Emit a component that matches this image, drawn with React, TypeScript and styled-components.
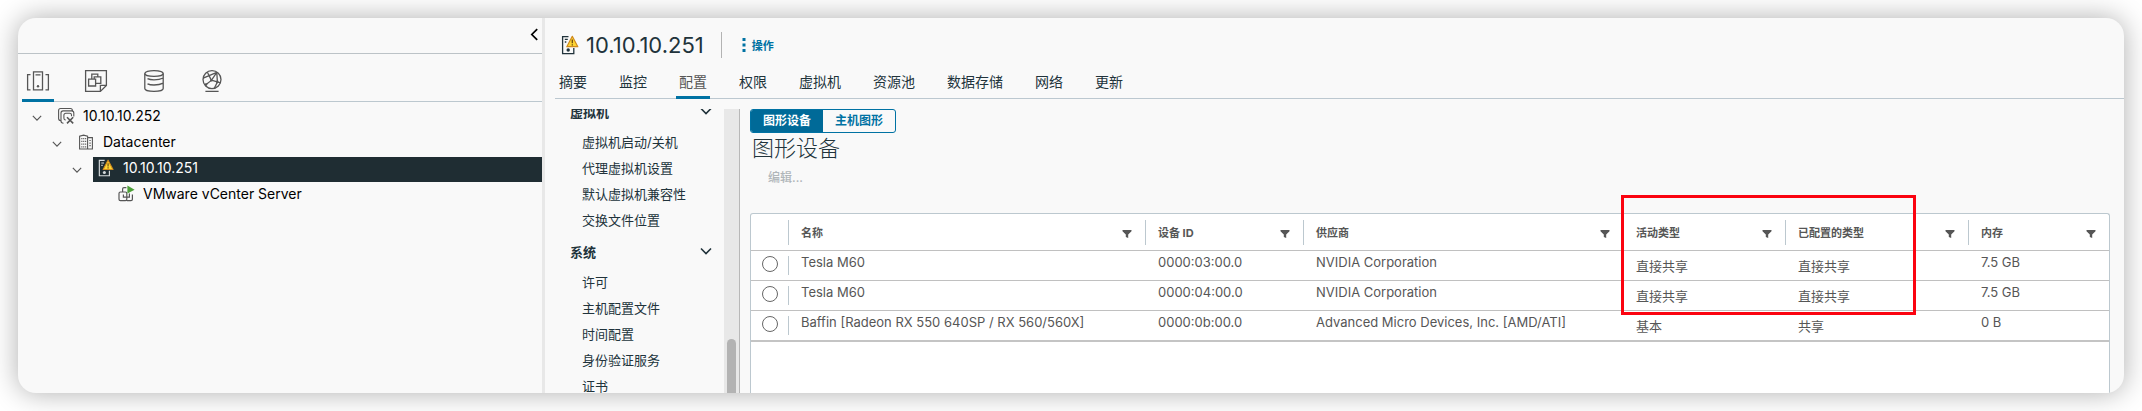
import React from "react";
import styled, { createGlobalStyle } from "styled-components";

const GlobalStyle = createGlobalStyle`
  *, *::before, *::after { box-sizing: border-box; }
  body {
    margin: 0;
    background: #fff;
    color: #000;
    font-family: Inter, "Noto Sans CJK SC", sans-serif;
    font-size: 14px;
  }
  button {
    font: inherit;
    color: inherit;
    background: none;
    border: 0;
    margin: 0;
    padding: 0;
    cursor: pointer;
  }
`;

const Shell = styled.div`
  display: flex;
  height: calc(100vh - 36px);
  margin: 18px;
  overflow: hidden;
  border-radius: 18px;
  background: #f9f9f9;
`;

const Backdrop = styled.div`
  display: flow-root;
  overflow: hidden;
  & > ${Shell} { box-shadow: 0 0 28px rgba(0, 0, 0, 0.32); }
`;

/* Inventory sidebar */

const Sidebar = styled.aside`
  flex: 0 0 527px;
  display: flex;
  flex-direction: column;
  border-right: 3px solid #e8e8e8;
`;

const SidebarTop = styled.div`
  display: flex;
  justify-content: flex-end;
  align-items: center;
  height: 36px;
  padding-right: 1px;
  border-bottom: 1px solid #bcc3c7;
`;

const InventoryTabs = styled.div`
  display: flex;
  gap: 26px;
  height: 48px;
  margin-left: 4px;
  border-bottom: 1px solid #bcc8cf;
`;

const InventoryTab = styled.button<{ $active?: boolean }>`
  display: flex;
  justify-content: center;
  width: 32px;
  height: 48px;
  padding-top: 15px;
  border-bottom: 3px solid ${(p) => (p.$active ? "#0072a3" : "transparent")};
  color: #565656;
`;

const Tree = styled.ul`
  list-style: none;
  margin: 0;
  padding: 3px 0 0;
`;

const TreeRow = styled.li<{ $depth: number }>`
  display: flex;
  align-items: center;
  height: 25px;
  margin-bottom: 1px;
  padding-left: ${(p) => 11 + p.$depth * 20}px;
`;

const Twisty = styled.button`
  display: flex;
  justify-content: center;
  width: 16px;
  margin-right: 8px;
  color: #565656;
`;

const TwistySpace = styled.span`
  width: 24px;
`;

const TreeLabel = styled.button<{ $selected?: boolean }>`
  flex: 1;
  display: flex;
  align-items: center;
  gap: 8px;
  height: 25px;
  padding: 0 0 3px 4px;
  line-height: 20px;
  background: ${(p) => (p.$selected ? "#1f2d33" : "transparent")};
  color: ${(p) => (p.$selected ? "#fff" : "#000")};
  & > svg {
    width: 18px;
    color: ${(p) => (p.$selected ? "#d5dadc" : "#565656")};
  }
`;

/* Object view */

const Main = styled.main`
  flex: 1;
  min-width: 0;
  display: flex;
  flex-direction: column;
  color: #21333b;
`;

const TitleBar = styled.header`
  display: flex;
  align-items: center;
  height: 54px;
  padding-left: 16px;
`;

const Title = styled.h1`
  margin: 0 17px 0 7px;
  font-size: 22px;
  line-height: 28px;
  font-weight: 400;
`;

const ActionsButton = styled.button`
  display: flex;
  align-items: center;
  gap: 6px;
  height: 26px;
  padding-left: 20px;
  border-left: 1px solid #b3b3b3;
  color: #0072a3;
  font-size: 11px;
  font-weight: 700;
`;

const TabBar = styled.nav`
  display: flex;
  gap: 26px;
  height: 27px;
  margin-left: 10px;
  padding-left: 1px;
  border-bottom: 1px solid #bcc8d0;
`;

const Tab = styled.button<{ $active?: boolean }>`
  height: 27px;
  padding: 0 3px 5px;
  line-height: 19px;
  border-bottom: 3px solid ${(p) => (p.$active ? "#0072a3" : "transparent")};
  color: ${(p) => (p.$active ? "#565656" : "#21333b")};
`;

const Body = styled.div`
  flex: 1;
  min-height: 0;
  display: flex;
  padding-top: 10px;
`;

const Settings = styled.nav`
  flex: 0 0 195px;
  display: flex;
  justify-content: space-between;
  overflow: hidden;
  border-right: 1px solid #b8b8b8;
  font-size: 13px;
`;

const SettingsList = styled.div`
  width: 167px;
  margin-top: -16px;
  padding-left: 25px;
`;

const GroupHeading = styled.button`
  display: flex;
  align-items: center;
  justify-content: space-between;
  width: 100%;
  height: 36px;
  font-weight: 700;
`;

const SettingsLink = styled.a`
  display: block;
  height: 26px;
  padding-left: 12px;
  line-height: 26px;
  color: #21333b;
  text-decoration: none;
  white-space: nowrap;
`;

const ScrollTrack = styled.div`
  width: 15px;
  padding: 230px 3px 0;
  background: #e8e8e8;
`;

const ScrollThumb = styled.div`
  height: 100px;
  border-radius: 5px;
  background: #b3b3b3;
`;

const Content = styled.section`
  flex: 1;
  min-width: 0;
  display: flex;
  flex-direction: column;
  align-items: flex-start;
  padding: 0 14px 0 10px;
`;

const Switcher = styled.div`
  display: flex;
  height: 24px;
  overflow: hidden;
  border: 1px solid #0072a3;
  border-radius: 3px;
`;

const SwitchButton = styled.button<{ $active?: boolean }>`
  padding: 0 12px;
  font-size: 12px;
  font-weight: 700;
  line-height: 22px;
  background: ${(p) => (p.$active ? "#006a98" : "transparent")};
  color: ${(p) => (p.$active ? "#fff" : "#0072a3")};
`;

const Heading = styled.h2`
  margin: 0 0 0 2px;
  font-size: 22px;
  line-height: 30px;
  font-weight: 300;
`;

const EditButton = styled.button`
  margin: 5px 0 25px 18px;
  font-size: 12px;
  font-weight: 500;
  line-height: 20px;
  &:disabled { color: #b0b6b9; cursor: default; }
`;

const Grid = styled.div`
  position: relative;
  flex: 1;
  align-self: stretch;
  border: 1px solid #bcc8cf;
  border-bottom: 0;
  border-radius: 3px 3px 0 0;
  background: #fff;
`;

const Table = styled.table`
  width: 100%;
  table-layout: fixed;
  border-collapse: separate;
  border-spacing: 0;
  color: #565656;
  font-size: 13px;
`;

const Column = styled.col<{ $width?: number }>`
  width: ${(p) => (p.$width ? p.$width + "px" : "auto")};
`;

const HeadCell = styled.th`
  height: 37px;
  padding: 0;
  border-bottom: 1px solid #c0c0c0;
  font-size: 11px;
  text-align: left;
`;

const HeadInner = styled.div<{ $ruled?: boolean }>`
  display: flex;
  align-items: center;
  justify-content: space-between;
  height: 25px;
  padding: 0 13px 0 12px;
  border-left: 1px solid ${(p) => (p.$ruled ? "#bcc8cf" : "transparent")};
`;

const FilterButton = styled.button`
  display: flex;
  padding-top: 4px;
  color: #565656;
`;

const Row = styled.tr`
  &:last-child > td { border-bottom: 2px solid #c4c4c4; height: 31px; }
`;

const Cell = styled.td<{ $low?: boolean }>`
  height: 30px;
  padding: ${(p) => (p.$low ? "5px 0 0 13px" : "1px 0 0 13px")};
  border-bottom: 1px solid #c0c0c0;
  line-height: 20px;
  vertical-align: top;
  white-space: nowrap;
`;

const PickCell = styled(Cell)`
  padding: 5px 0 0;
`;

const PickInner = styled.div`
  display: flex;
  padding-left: 11px;
  height: 19px;
`;

const Radio = styled.input`
  appearance: none;
  width: 16px;
  height: 16px;
  margin: 0;
  border: 1px solid #666;
  border-radius: 50%;
  background: #fff;
`;

const RuledValue = styled.div`
  height: 19px;
  margin: 4px 0 0 -13px;
  padding-left: 12px;
  border-left: 1px solid #bcc8cf;
  line-height: 12px;
`;

const Highlight = styled.div`
  position: absolute;
  top: -19px;
  right: 193px;
  width: 295px;
  height: 120px;
  border: 3px solid #fb0310;
  pointer-events: none;
`;

/* Icons */

type ChevronProps = { dir: "down" | "left"; width: number; stroke: number };

const Chevron = ({ dir, width, stroke }: ChevronProps) => (
  <svg width={width} height={width} viewBox="0 0 12 12" fill="none" stroke="currentColor" strokeWidth={stroke} aria-hidden="true">
    <path d={dir === "down" ? "M1 3.5 6 8.5 11 3.5" : "M8.5 1 3.5 6 8.5 11"} />
  </svg>
);

const Line = ({ size, children }: { size: number; children: React.ReactNode }) => (
  <svg width={size} height={size} viewBox={`0 0 ${size} ${size}`} fill="none" stroke="currentColor" strokeWidth="1.3" aria-hidden="true">
    {children}
  </svg>
);

const HostsIcon = () => (
  <Line size={24}>
    <path d="M7.5 2.9h9v18h-9zM9.5 5.800h5M4.500 5.600H1.600v15.200h2.900M19.500 5.600h2.900v15.200h-2.900" />
    <circle cx="12" cy="17.2" r="1.2" fill="currentColor" stroke="none" />
  </Line>
);

const VmsIcon = () => (
  <Line size={24}>
    <path d="M1.6 1.6h20.8v14.8l-6 6H1.6zM16.4 22.4v-6h6" />
    <path d="M4.6 10.2h7V17h-7zM7.8 10V5.2h6v2.6M10.2 10V7.8h6.6v6.6h-5" />
  </Line>
);

const StorageIcon = () => (
  <Line size={24}>
    <ellipse cx="12" cy="4.5" rx="9.2" ry="2.9" />
    <path d="M2.8 4.5v15c0 1.6 4.1 2.9 9.2 2.9s9.2-1.3 9.2-2.900v-15M5.500 9.600c1.600.8 4 1.200 6.500 1.200 3.800 0 7-.7 9.200-1.800M5.500 14.800c1.600.8 4 1.200 6.500 1.200 3.800 0 7-.7 9.200-1.800" />
  </Line>
);

const NetworkIcon = () => (
  <Line size={24}>
    <circle cx="12" cy="10.6" r="9" />
    <path d="M5.4 22.4h13.2M3.2 9.2 16.8 3.4M7.4 3.2l4 8.2M11.4 11.2l9.2 2.6M16.8 3.4l-5.4 8-6 4.6M16.8 3.4l.6 9.6-3 6" />
    <circle cx="11.4" cy="11.4" r="1.2" fill="currentColor" stroke="none" />
    <circle cx="6" cy="15.6" r="1.3" fill="currentColor" stroke="none" />
    <circle cx="17.3" cy="12.9" r="1.3" fill="currentColor" stroke="none" />
  </Line>
);

const VCenterIcon = () => (
  <Line size={18}>
    <path
      d="M3.6 13.6c-1.1 0-2-.9-2-2V3.5c0-1.1.9-2 2-2h9.8c1.1 0 2 .9 2 2M6.5 16.2c-1.6 0-2.5-.9-2.5-2.2V6c0-1.2.9-2.1 2.1-2.1h8.6c1.2 0 2.1.9 2.1 2.1v3.4M8.8 13c-1.2 0-1.9-.7-1.9-1.8V8.1c0-1.1.7-1.8 1.9-1.8h3.9c1.1 0 1.8.7 1.8 1.8v1.2"
      strokeWidth="1.1"
    />
    <path d="m10 10.2 6.2 6.2M16.2 10.2 10 16.4" strokeWidth="1.6" />
  </Line>
);

const DatacenterIcon = () => (
  <Line size={18}>
    <path d="M2.600 16V3.200l4-1.100 4 1.100V16zM10.600 4.600h4.800V16h-4.800" strokeWidth="1.1" />
    <path
      d="M4.3 5.6h1.1m.8 0h1.1m.8 0h1.1m-4.9 2.8h1.1m.8 0h1.1m.8 0h1.1m-4.9 2.8h1.1m.8 0h1.1m.8 0h1.1m-4.9 2.7h1.1m.8 0h1.1m.8 0h1.1M12.4 7.5h1.3m-1.3 2.6h1.3m-1.3 2.6h1.3"
      strokeWidth="1.2"
    />
  </Line>
);

const HostWarningIcon = ({ width, height }: { width: number; height: number }) => (
  <svg width={width} height={height} viewBox="0 0 18 20" fill="none" stroke="currentColor" strokeWidth="1.3" aria-hidden="true">
    <path d="M7.5 1.6H1.6v17h11.2V13M3.8 4.4h3M3.8 7h1.5" />
    <circle cx="7.2" cy="15" r="1.7" fill="currentColor" stroke="none" />
    <path d="M11.3 1.3 16.8 11.7H5.8z" fill="#fdd534" stroke="#d08a1c" strokeWidth="1.2" strokeLinejoin="round" />
    <path d="M11.3 4.6v3.6M11.3 9.3v1.3" stroke="#6b4a10" strokeWidth="1.3" />
  </svg>
);

const VmRunningIcon = () => (
  <Line size={18}>
    <path
      d="M5.6 7V4c0-.9.5-1.4 1.4-1.4h2.4M3.4 7h5c.9 0 1.4.5 1.4 1.4v5.800c0 .9-.5 1.400-1.400 1.400h-5c-.9 0-1.400-.5-1.400-1.400V8.400C2 7.500 2.500 7 3.400 7zM9.800 15.600H14c.9 0 1.400-.5 1.400-1.400V9.500M6.400 9.600v2.600h6V8.600"
      strokeWidth="1.2"
    />
    <path d="M10.4.6 17.6 4.7 10.4 8.6z" fill="#4c9f38" stroke="none" />
  </Line>
);

const DotsIcon = () => (
  <svg width="4" height="16" viewBox="0 0 4 16" fill="currentColor" aria-hidden="true">
    <path d="M.5 1h3v3h-3zM.5 6.500h3v3h-3zM.5 12h3v3h-3z" />
  </svg>
);

const FilterIcon = () => (
  <svg width="10" height="10" viewBox="0 0 10 10" fill="currentColor" aria-hidden="true">
    <path d="M.5 1h9v1.2L6.2 5.6V9L3.8 8V5.6L.5 2.2z" />
  </svg>
);

/* Data */

const inventory = [
  { label: "10.10.10.252", icon: <VCenterIcon />, open: true },
  { label: "Datacenter", icon: <DatacenterIcon />, open: true },
  { label: "10.10.10.251", icon: <HostWarningIcon width={18} height={18} />, open: true, selected: true },
  { label: "VMware vCenter Server", icon: <VmRunningIcon /> },
];

const tabs = ["摘要", "监控", "配置", "权限", "虚拟机", "资源池", "数据存储", "网络", "更新"];

const settings = [
  { title: "虚拟机", items: ["虚拟机启动/关机", "代理虚拟机设置", "默认虚拟机兼容性", "交换文件位置"] },
  { title: "系统", items: ["许可", "主机配置文件", "时间配置", "身份验证服务", "证书"] },
];

const columns = [
  { title: "名称" },
  { title: "设备 ID", width: 158 },
  { title: "供应商", width: 320 },
  { title: "活动类型", width: 162 },
  { title: "已配置的类型", width: 183 },
  { title: "内存", width: 141 },
];

const devices = [
  ["Tesla M60", "0000:03:00.0", "NVIDIA Corporation", "直接共享", "直接共享", "7.5 GB"],
  ["Tesla M60", "0000:04:00.0", "NVIDIA Corporation", "直接共享", "直接共享", "7.5 GB"],
  ["Baffin [Radeon RX 550 640SP / RX 560/560X]", "0000:0b:00.0", "Advanced Micro Devices, Inc. [AMD/ATI]", "基本", "共享", "0 B"],
];

const inventoryViews = [
  { name: "主机和集群", icon: <HostsIcon /> },
  { name: "虚拟机和模板", icon: <VmsIcon /> },
  { name: "存储", icon: <StorageIcon /> },
  { name: "网络", icon: <NetworkIcon /> },
];

export default function App() {
  return (
    <Backdrop>
      <GlobalStyle />
      <Shell>
        <Sidebar>
          <SidebarTop>
            <button aria-label="收起">
              <Chevron dir="left" width={13} stroke={1.6} />
            </button>
          </SidebarTop>
          <InventoryTabs>
            {inventoryViews.map((view, i) => (
              <InventoryTab key={view.name} aria-label={view.name} $active={i === 0}>
                {view.icon}
              </InventoryTab>
            ))}
          </InventoryTabs>
          <Tree>
            {inventory.map((node, depth) => (
              <TreeRow key={node.label} $depth={depth}>
                {node.open ? (
                  <Twisty aria-label="折叠">
                    <Chevron dir="down" width={10} stroke={1.4} />
                  </Twisty>
                ) : (
                  <TwistySpace />
                )}
                <TreeLabel $selected={node.selected}>
                  {node.icon}
                  {node.label}
                </TreeLabel>
              </TreeRow>
            ))}
          </Tree>
        </Sidebar>

        <Main>
          <TitleBar>
            <HostWarningIcon width={18} height={20} />
            <Title>10.10.10.251</Title>
            <ActionsButton>
              <DotsIcon />
              操作
            </ActionsButton>
          </TitleBar>
          <TabBar>
            {tabs.map((tab) => (
              <Tab key={tab} $active={tab === "配置"}>
                {tab}
              </Tab>
            ))}
          </TabBar>
          <Body>
            <Settings>
              <SettingsList>
                {settings.map((group) => (
                  <React.Fragment key={group.title}>
                    <GroupHeading>
                      {group.title}
                      <Chevron dir="down" width={12} stroke={1.6} />
                    </GroupHeading>
                    {group.items.map((item) => (
                      <SettingsLink key={item} href="#">
                        {item}
                      </SettingsLink>
                    ))}
                  </React.Fragment>
                ))}
              </SettingsList>
              <ScrollTrack>
                <ScrollThumb />
              </ScrollTrack>
            </Settings>
            <Content>
              <Switcher>
                <SwitchButton $active>图形设备</SwitchButton>
                <SwitchButton>主机图形</SwitchButton>
              </Switcher>
              <Heading>图形设备</Heading>
              <EditButton disabled>编辑...</EditButton>
              <Grid>
                <Table>
                  <colgroup>
                    <Column $width={37} />
                    {columns.map((c) => (
                      <Column key={c.title} $width={c.width} />
                    ))}
                  </colgroup>
                  <thead>
                    <tr>
                      <HeadCell as="td">
                        <HeadInner />
                      </HeadCell>
                      {columns.map((c) => (
                        <HeadCell key={c.title} scope="col">
                          <HeadInner $ruled>
                            {c.title}
                            <FilterButton aria-label={`筛选${c.title}`}>
                              <FilterIcon />
                            </FilterButton>
                          </HeadInner>
                        </HeadCell>
                      ))}
                    </tr>
                  </thead>
                  <tbody>
                    {devices.map((device) => (
                      <Row key={device[1]}>
                        <PickCell>
                          <PickInner>
                            <Radio type="radio" name="device" aria-label={device[1]} />
                          </PickInner>
                        </PickCell>
                        {device.map((value, i) => (
                          <Cell key={columns[i].title} $low={i === 3 || i === 4}>
                            {i === 0 ? <RuledValue>{value}</RuledValue> : value}
                          </Cell>
                        ))}
                      </Row>
                    ))}
                  </tbody>
                </Table>
                <Highlight />
              </Grid>
            </Content>
          </Body>
        </Main>
      </Shell>
    </Backdrop>
  );
}
